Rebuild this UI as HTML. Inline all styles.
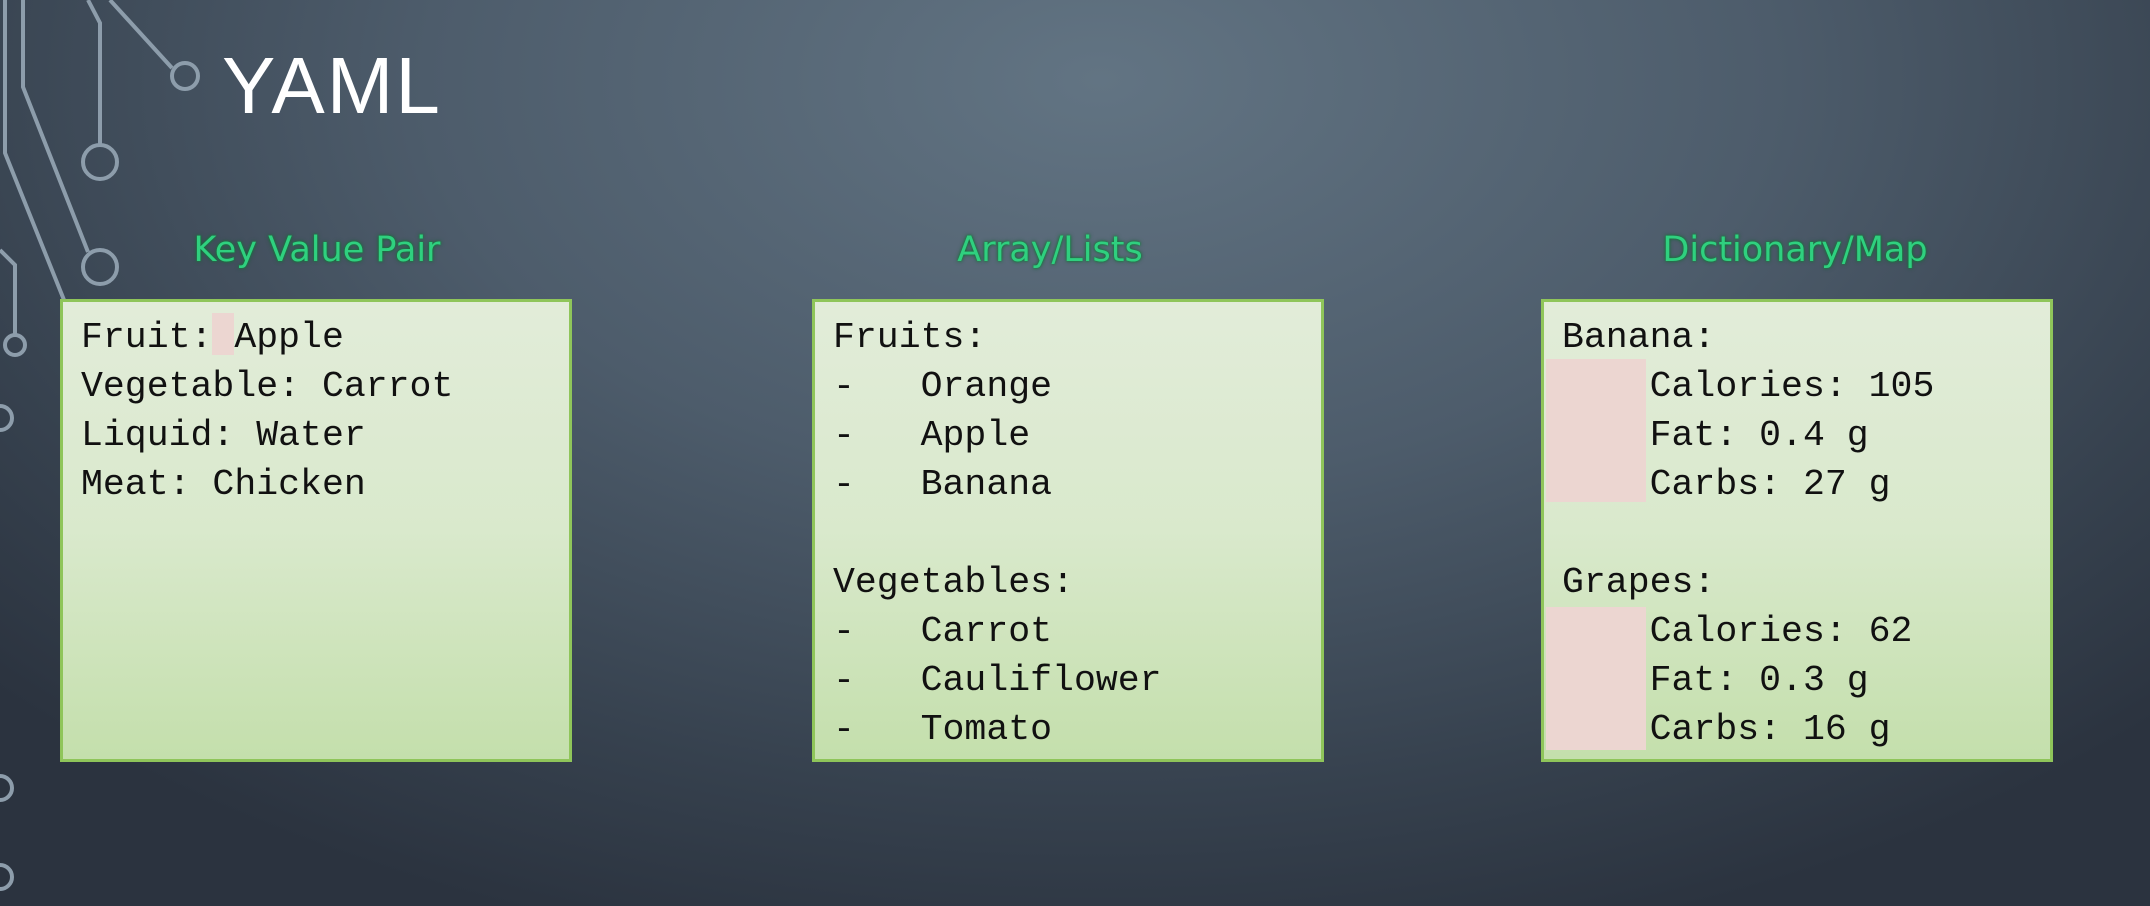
<!DOCTYPE html>
<html><head><meta charset="utf-8"><style>
html,body{margin:0;padding:0}
body{width:2150px;height:906px;overflow:hidden;position:relative;
background:radial-gradient(ellipse 1500px 900px at 1100px 80px,#627483 0%,#4d5c6b 45%,#36414e 80%,#2b333f 100%);
font-family:"Liberation Sans",sans-serif}
.title{position:absolute;left:222px;top:40px;font-size:80px;color:#fff;letter-spacing:2px;font-family:"Liberation Sans",sans-serif;font-weight:normal}
.h{position:absolute;top:230px;font-size:35px;color:#2fd07f;text-align:center;width:520px;text-shadow:0 0 4px #1a5a3a,0 0 2px #0a3;font-family:"DejaVu Sans","Liberation Sans",sans-serif}
.box{position:absolute;top:299px;height:457px;width:506px;border:3px solid #8fc55a;
background:linear-gradient(180deg,#e2ecd9 0%,#d9e9cc 50%,#c4dfac 100%);box-sizing:content-box}
pre{margin:0;position:absolute;left:18px;top:11px;font-family:"Liberation Mono",monospace;font-size:36.5px;line-height:49px;color:#111}
.pk{position:absolute;background:#ecd6d1}
</style></head><body>
<svg width="260" height="906" style="position:absolute;left:0;top:0" fill="none" stroke="#8d9dab" stroke-width="4">
<path d="M5 0 V153 L64 300"/>
<path d="M23 0 V87 L88 252"/>
<circle cx="100" cy="267" r="17"/>
<path d="M88 0 L100 23 V145"/>
<circle cx="100" cy="162" r="17"/>
<path d="M110 0 L172 68"/>
<circle cx="185" cy="76" r="13"/>
<path d="M0 250 L15 265 V335"/>
<circle cx="15" cy="345" r="10"/>
<circle cx="0" cy="418" r="12"/>
<circle cx="0" cy="788" r="12"/>
<circle cx="0" cy="877" r="12"/>
</svg>
<div class="title">YAML</div>
<div class="h" style="left:57px">Key Value Pair</div>
<div class="h" style="left:790px">Array/Lists</div>
<div class="h" style="left:1535px">Dictionary/Map</div>

<div class="box" style="left:60px">
<div class="pk" style="left:149px;top:11px;width:22px;height:42px"></div>
<pre>Fruit: Apple
Vegetable: Carrot
Liquid: Water
Meat: Chicken</pre></div>

<div class="box" style="left:812px">
<pre>Fruits:
-   Orange
-   Apple
-   Banana

Vegetables:
-   Carrot
-   Cauliflower
-   Tomato</pre></div>

<div class="box" style="left:1541px">
<div class="pk" style="left:2px;top:57px;width:100px;height:143px"></div>
<div class="pk" style="left:2px;top:305px;width:100px;height:143px"></div>
<pre>Banana:
    Calories: 105
    Fat: 0.4 g
    Carbs: 27 g

Grapes:
    Calories: 62
    Fat: 0.3 g
    Carbs: 16 g</pre></div>
</body></html>
